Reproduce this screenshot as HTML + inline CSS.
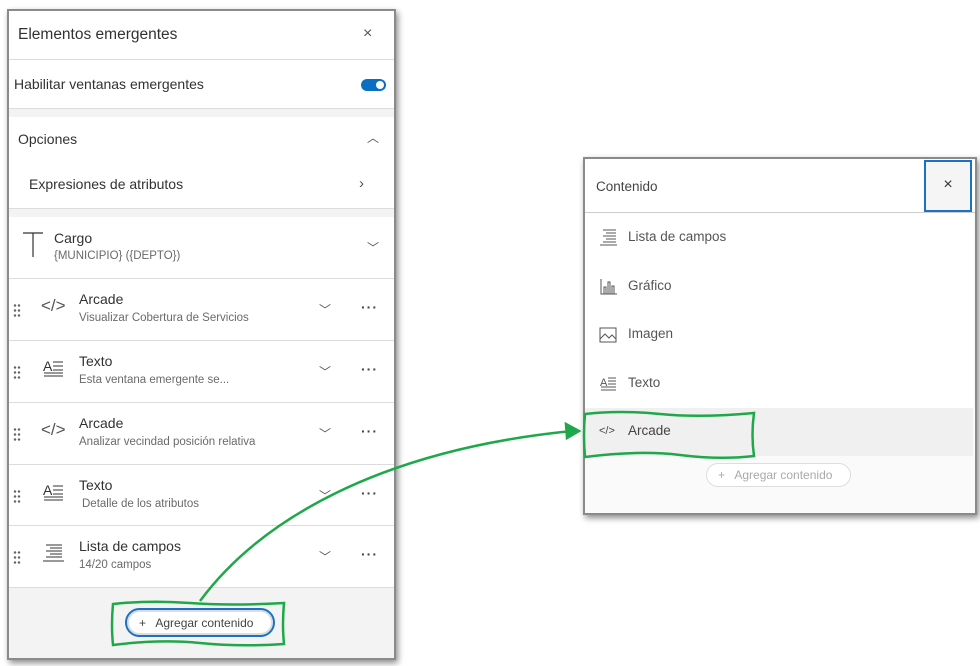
<!DOCTYPE html>
<html><head><meta charset="utf-8"><style>
*{box-sizing:border-box;margin:0;padding:0}
body{width:980px;height:666px;background:#fff;font-family:"Liberation Sans",sans-serif;color:#323232;position:relative;overflow:hidden}
.panel{position:absolute;background:#fff;box-shadow:0 0 0 2px #8a8a8a,2px 3px 6px 2px rgba(0,0,0,.45)}
.row{position:absolute;left:0;right:0;border-bottom:1px solid #dcdcdc;background:#fff}
.t{position:absolute;font-size:14px;color:#323232}
.s{position:absolute;font-size:11.5px;color:#6a6a6a}
.chev{position:absolute;font-size:12px;color:#555}
.dots{position:absolute;font-size:14px;letter-spacing:1px;color:#444;font-weight:bold}
.grip{position:absolute;width:8px;height:14px;background:radial-gradient(circle,#666 1.1px,transparent 1.4px) 0 0/4px 5px}
.code{position:absolute;font-size:17px;color:#555}
svg{position:absolute}
</style></head><body>

<div class="panel" style="left:9px;top:11px;width:385px;height:647px;background:#f3f3f3">
 <div class="row" style="top:0;height:49px"><div class="t" style="left:9px;top:15px;font-size:15.5px">Elementos emergentes</div><div class="t" style="left:354px;top:14px;font-size:16px;color:#555">×</div></div>
 <div class="row" style="top:49px;height:49px"><div class="t" style="left:5px;top:16px">Habilitar ventanas emergentes</div>
  <div style="position:absolute;left:352px;top:19px;width:25px;height:12px;border-radius:6px;background:#0a6fc2"><div style="position:absolute;right:2px;top:2px;width:8px;height:8px;border-radius:50%;background:#fff"></div></div></div>
 <div class="row" style="top:106px;height:44px;border:none"><div class="t" style="left:9px;top:14px">Opciones</div><div class="chev" style="left:358px;top:12px">︿</div></div>
 <div class="row" style="top:150px;height:48px"><div class="t" style="left:20px;top:15px">Expresiones de atributos</div><div class="chev" style="left:350px;top:14px;font-size:15px">›</div></div>
 <div class="row" style="top:206px;height:62px"><svg style="left:13px;top:15px" width="22" height="26"><path d="M1 1H21M11 1V25" stroke="#333" stroke-width="1.2" fill="none"/></svg>
  <div class="t" style="left:45px;top:13px">Cargo</div><div class="s" style="left:45px;top:33px">{MUNICIPIO} ({DEPTO})</div><div class="chev" style="left:358px;top:22px">﹀</div></div>
</div>

<div style="position:absolute;left:9px;top:279px;width:385px;height:309px">
 <div class="row" style="top:0;height:62px"><div class="grip" style="left:4px;top:24px"></div><div class="code" style="left:32px;top:17px">&lt;/&gt;</div><div class="t" style="left:70px;top:12px">Arcade</div><div class="s" style="left:70px;top:33px">Visualizar Cobertura de Servicios</div><div class="chev" style="left:310px;top:22px">﹀</div><div class="dots" style="left:352px;top:20px">···</div></div>
 <div class="row" style="top:62px;height:62px"><div class="grip" style="left:4px;top:24px"></div><svg style="left:34px;top:17px" width="22" height="20"><text x="0" y="13" font-size="14" font-family="Liberation Sans" fill="#333">A</text><path d="M10 4H20M10 8H20M10 12H20M1 15H20M1 18H20" stroke="#333" stroke-width="1"/></svg><div class="t" style="left:70px;top:12px">Texto</div><div class="s" style="left:70px;top:33px">Esta ventana emergente se...</div><div class="chev" style="left:310px;top:22px">﹀</div><div class="dots" style="left:352px;top:20px">···</div></div>
 <div class="row" style="top:124px;height:62px"><div class="grip" style="left:4px;top:24px"></div><div class="code" style="left:32px;top:17px">&lt;/&gt;</div><div class="t" style="left:70px;top:12px">Arcade</div><div class="s" style="left:70px;top:33px">Analizar vecindad posición relativa</div><div class="chev" style="left:310px;top:22px">﹀</div><div class="dots" style="left:352px;top:20px">···</div></div>
 <div class="row" style="top:186px;height:61px"><div class="grip" style="left:4px;top:24px"></div><svg style="left:34px;top:17px" width="22" height="20"><text x="0" y="13" font-size="14" font-family="Liberation Sans" fill="#333">A</text><path d="M10 4H20M10 8H20M10 12H20M1 15H20M1 18H20" stroke="#333" stroke-width="1"/></svg><div class="t" style="left:70px;top:12px">Texto</div><div class="s" style="left:73px;top:33px">Detalle de los atributos</div><div class="chev" style="left:310px;top:22px">﹀</div><div class="dots" style="left:352px;top:20px">···</div></div>
 <div class="row" style="top:247px;height:62px"><div class="grip" style="left:4px;top:24px"></div><svg style="left:33px;top:17px" width="24" height="20"><path d="M4 2H20M8 5H20M4 8H20M8 11H20M4 14H20M1 18H22" stroke="#333" stroke-width="1"/></svg><div class="t" style="left:70px;top:12px">Lista de campos</div><div class="s" style="left:70px;top:33px">14/20 campos</div><div class="chev" style="left:310px;top:22px">﹀</div><div class="dots" style="left:352px;top:20px">···</div></div>
</div>
<div style="position:absolute;left:125px;top:608px;width:150px;height:29px;border:2px solid #1b72c4;border-radius:15px;background:#fff;box-shadow:inset 0 0 0 2px #ddd;font-size:12px;color:#444;padding:6px 0 0 12px">+&nbsp;&nbsp; Agregar contenido</div>

<div class="panel" style="left:585px;top:159px;width:390px;height:354px;background:#fafafa">
 <div class="row" style="top:0;height:54px;border-color:#ccc"><div class="t" style="left:11px;top:20px;font-size:13.5px;color:#444">Contenido</div>
  <div style="position:absolute;left:339px;top:1px;width:48px;height:52px;border:2px solid #1b72c4;background:#f5f5f5;text-align:center;font-size:16px;padding-top:14px">×</div></div>
 <div style="position:absolute;top:54px;left:0;width:388px;height:195px;background:#fff"></div>
 <svg style="left:14px;top:70px" width="20" height="18"><path d="M4 1H17M7 4H17M4 7H17M7 10H17M4 13H17M1 16H18" stroke="#555" stroke-width="1"/></svg>
 <div class="t" style="left:43px;top:70px;font-size:13.5px;color:#555">Lista de campos</div>
 <svg style="left:15px;top:119px" width="18" height="18"><path d="M1 1V16H17M4 16V9H6V16M8 16V4H10V16M12 16V8H14V16" stroke="#555" stroke-width="1" fill="none"/></svg>
 <div class="t" style="left:43px;top:119px;font-size:13.5px;color:#555">Gráfico</div>
 <svg style="left:14px;top:168px" width="18" height="16"><rect x="1" y="1" width="16" height="14" stroke="#555" fill="none"/><path d="M1 12L6 7L10 11L13 8L17 12" stroke="#555" fill="none"/></svg>
 <div class="t" style="left:43px;top:167px;font-size:13.5px;color:#555">Imagen</div>
 <svg style="left:15px;top:216px" width="18" height="18"><text x="0" y="11" font-size="11" font-family="Liberation Sans" fill="#555">A</text><path d="M8 3H16M8 6H16M8 9H16M1 12H16M1 15H16" stroke="#555" stroke-width="1"/></svg>
 <div class="t" style="left:43px;top:216px;font-size:13.5px;color:#555">Texto</div>
 <div style="position:absolute;top:249px;left:0;width:388px;height:48px;background:#f0f0f0"></div>
 <div class="t" style="left:14px;top:266px;font-size:11px;color:#444">&lt;/&gt;</div>
 <div class="t" style="left:43px;top:264px;font-size:13.5px;color:#444">Arcade</div>
 <div style="position:absolute;left:121px;top:304px;width:145px;height:24px;border:1px solid #ddd;border-radius:12px;background:#fff;font-size:12px;color:#aaa;padding:4px 0 0 11px">+&nbsp;&nbsp; Agregar contenido</div>
</div>

<svg style="left:0;top:0" width="980" height="666">
 <g fill="none" stroke="#1fa84a" stroke-width="2.5">
  <path d="M200 601C260 520 380 450 572 431"/>
  <path d="M566 424L579 431L567 438Z" fill="#1fa84a"/>
  <path d="M113 604Q150 600 190 603T284 603Q282 625 284 644Q240 647 200 643T113 645Q111 625 113 604Z"/>
  <path d="M585 414Q620 410 660 414T754 413Q751 435 754 456Q720 460 680 455T585 457Q583 435 585 414Z"/>
 </g>
</svg>
</body></html>
